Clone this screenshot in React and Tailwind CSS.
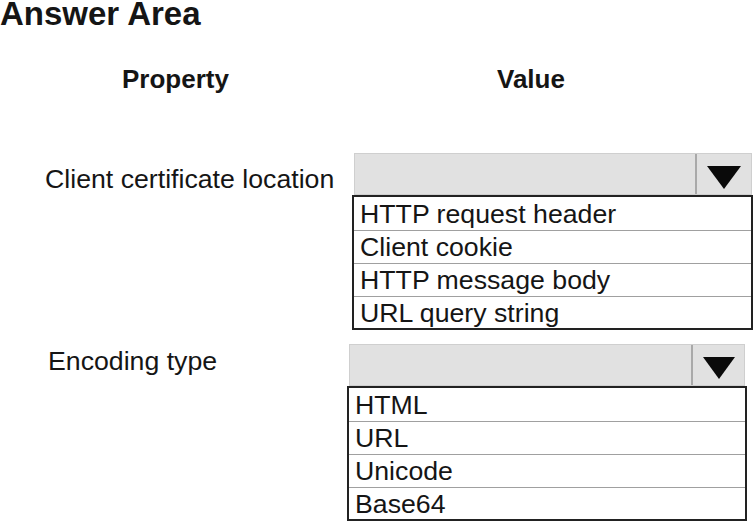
import React from "react";

function Triangle({ w, h }) {
  return (
    <svg width={w} height={h} viewBox={`0 0 ${w} ${h}`} className="block">
      <polygon points={`0,0 ${w},0 ${w / 2},${h}`} fill="#0a0a0a" />
    </svg>
  );
}

export default function App() {
  const font = { fontFamily: '"Liberation Sans", Arial, sans-serif' };
  return (
    <div
      className="w-[754px] h-[526px] bg-white text-[#151515] overflow-hidden"
      style={font}
    >
      <div className="text-[33px] font-bold leading-[27px]">
        Answer Area
      </div>

      <div className="mt-[39px] flex text-[26px] font-bold leading-[26px]">
        <div className="w-[497px] pl-[122px]">Property</div>
        <div>Value</div>
      </div>

      {/* Row 1 */}
      <div className="mt-[61px] flex">
        <div className="w-[354px] pl-[45px] pt-[5px] text-[26.7px] leading-[42px] whitespace-nowrap">
          Client certificate location
        </div>
        <div className="w-[398px] flex flex-col">
          <div className="h-[42px] flex bg-[#e1e1e1] border border-[#cfcfcf]">
            <div className="flex-1" />
            <div className="w-[56px] border-l-2 border-[#a9a9a9] flex justify-center pt-[12px]">
              <Triangle w={34} h={23} />
            </div>
          </div>
          <div className="-ml-[2px] w-[401px] border-2 border-[#222] text-[26.7px] leading-[32px]">
            <div className="h-[33px] pl-[6px] pt-[1px]">HTTP request header</div>
            <div className="h-[33px] pl-[6px] border-t border-[#a0a0a0]">Client cookie</div>
            <div className="h-[33px] pl-[6px] border-t border-[#a0a0a0]">HTTP message body</div>
            <div className="h-[32px] pl-[6px] border-t border-[#a0a0a0]">URL query string</div>
          </div>
        </div>
      </div>

      {/* Row 2 */}
      <div className="mt-[14px] flex">
        <div className="w-[349px] pl-[48px] -mt-[4px] text-[26.7px] leading-[42px]">
          Encoding type
        </div>
        <div className="w-[396px] flex flex-col">
          <div className="h-[42px] flex bg-[#e1e1e1] border border-[#cfcfcf]">
            <div className="flex-1" />
            <div className="w-[53px] border-l-2 border-[#a9a9a9] flex justify-center pt-[12px]">
              <Triangle w={32} h={22} />
            </div>
          </div>
          <div className="-ml-[2px] w-[400px] border-2 border-[#222] text-[26.7px] leading-[32px]">
            <div className="h-[33px] pl-[6px] pt-[1px]">HTML</div>
            <div className="h-[33px] pl-[6px] border-t border-[#a0a0a0]">URL</div>
            <div className="h-[33px] pl-[6px] border-t border-[#a0a0a0]">Unicode</div>
            <div className="h-[32px] pl-[6px] border-t border-[#a0a0a0]">Base64</div>
          </div>
        </div>
      </div>
    </div>
  );
}
